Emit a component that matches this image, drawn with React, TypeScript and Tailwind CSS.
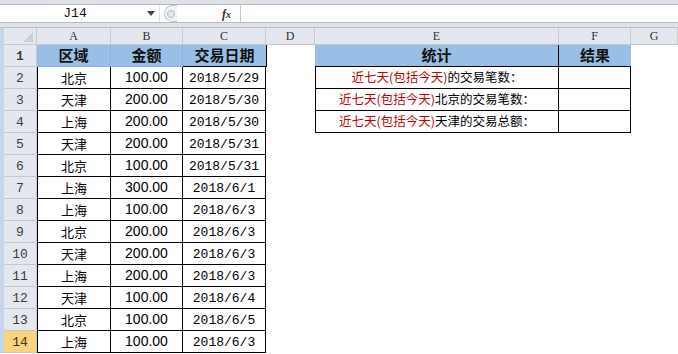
import React from "react";

const CJK = "font-['Noto_Sans_CJK_SC',sans-serif]";

const data: [string, string, string][] = [
  ["北京", "100.00", "2018/5/29"],
  ["天津", "200.00", "2018/5/30"],
  ["上海", "200.00", "2018/5/30"],
  ["天津", "200.00", "2018/5/31"],
  ["北京", "100.00", "2018/5/31"],
  ["上海", "300.00", "2018/6/1"],
  ["上海", "100.00", "2018/6/3"],
  ["北京", "200.00", "2018/6/3"],
  ["天津", "200.00", "2018/6/3"],
  ["上海", "200.00", "2018/6/3"],
  ["天津", "100.00", "2018/6/4"],
  ["北京", "100.00", "2018/6/5"],
  ["上海", "100.00", "2018/6/3"],
];

const stats = ["的交易笔数：", "北京的交易笔数：", "天津的交易总额："];

function RowHead({ n, selected }: { n: number; selected?: boolean }) {
  return (
    <>
      <div className="w-[4px] shrink-0 bg-[#c5d5ea]" />
      <div
        className={
          "flex w-[33px] shrink-0 items-center justify-center border-r border-b border-[#c5cad2] pt-[2px] font-['Liberation_Mono',monospace] text-[13px] " +
          (selected ? "bg-[#f8d47f] text-[#3b3220]" : "bg-[#e4e8ee] text-[#3c3c3c]")
        }
      >
        {n}
      </div>
    </>
  );
}

function ColHead({ w, label }: { w: string; label: string }) {
  return (
    <div
      className={`${w} flex shrink-0 items-center justify-center border-r border-b border-[#c5cad2] bg-[#e4e8ee] font-['Liberation_Serif',serif] text-[12px] text-[#333]`}
    >
      {label}
    </div>
  );
}

export default function App() {
  return (
    <div className="relative h-[354px] w-[678px] overflow-hidden bg-white">
      {/* formula bar */}
      <div className="h-[28px] border-b border-[#b9c0c9] bg-[#dfe3e8] pt-[4px]">
        <div className="flex h-[19px] border-y border-[#b3bac3] bg-white pl-[5px]">
          <div className="flex w-[155px] items-center border-r border-[#dfe3e8]">
            <span className="w-[140px] text-center font-['Liberation_Mono',monospace] text-[13px] text-[#111]">J14</span>
            <svg width="8" height="5" viewBox="0 0 8 5" className="ml-[2px]">
              <path d="M0 0h8L4 5z" fill="#444" />
            </svg>
          </div>
          <div className="flex w-[80px] items-center">
            <div className="ml-[4px] flex h-[17px] w-[13px] items-center justify-center rounded-l-full border border-r-0 border-[#c3c8cf] bg-[#f2f3f5]">
              <div className="h-[8px] w-[8px] rounded-full border border-[#b8bdc4] bg-[#e6e8eb]" />
            </div>
            <span className="ml-[45px] font-['Liberation_Serif',serif] text-[12px] font-bold italic text-[#333]">
              f<span className="text-[10px]">x</span>
            </span>
          </div>
          <div className="flex-1 border-l border-[#c3c8cf]" />
        </div>
      </div>

      {/* column headers */}
      <div className="flex h-[17px]">
        <div className="w-[4px] shrink-0 bg-[#c5d5ea]" />
        <div className="relative w-[33px] shrink-0 border-r border-b border-[#c5cad2] bg-[#e4e8ee]">
          <svg width="10" height="10" viewBox="0 0 10 10" className="absolute right-[3px] bottom-[2px]">
            <path d="M10 0v10H0z" fill="#c9ced5" />
          </svg>
        </div>
        <ColHead w="w-[74px]" label="A" />
        <ColHead w="w-[72px]" label="B" />
        <ColHead w="w-[83px]" label="C" />
        <ColHead w="w-[49px]" label="D" />
        <ColHead w="w-[244px]" label="E" />
        <ColHead w="w-[72px]" label="F" />
        <ColHead w="flex-1" label="G" />
      </div>

      {/* row 1 */}
      <div className={`flex h-[22px] ${CJK} text-[15px] font-bold text-[#111]`}>
        <RowHead n={1} />
        <div className="flex w-[74px] shrink-0 items-center justify-center border-r border-b border-[#8fb0d6] bg-[#99bfe6]">区域</div>
        <div className="flex w-[72px] shrink-0 items-center justify-center border-r border-b border-[#8fb0d6] bg-[#99bfe6]">金额</div>
        <div className="flex w-[83px] shrink-0 items-center justify-center border-b border-black bg-[#99bfe6]">交易日期</div>
        <div className="w-[49px] shrink-0 border-l border-black" />
        <div className="flex w-[244px] shrink-0 items-center justify-center border-r border-b border-black bg-[#99bfe6]">统计</div>
        <div className="flex w-[72px] shrink-0 items-center justify-center border-b border-black bg-[#99bfe6]">结果</div>
        <div className="flex-1" />
      </div>

      {/* data rows */}
      {data.map(([area, amount, date], i) => {
        const n = i + 2;
        const stat = i < 3 ? stats[i] : null;
        return (
          <div key={n} className="flex h-[22px]">
            <RowHead n={n} selected={n === 14} />
            <div className={`flex w-[74px] shrink-0 items-center justify-center border-x border-b border-black pt-[1px] ${CJK} text-[13px] text-black`}>
              {area}
            </div>
            <div className="flex w-[72px] shrink-0 items-center justify-center border-r border-b border-black font-['Liberation_Sans',sans-serif] text-[14px] text-black">
              {amount}
            </div>
            <div className="flex w-[83px] shrink-0 items-center justify-center border-r border-b border-black pt-[2px] font-['Liberation_Mono',monospace] text-[13px] text-black">
              {date}
            </div>
            <div className="w-[49px] shrink-0" />
            {stat ? (
              <>
                <div className={`flex w-[244px] shrink-0 items-center justify-center border-x border-b border-black ${CJK} text-[12.5px] text-black`}>
                  <span className="text-[#c00000]">近七天(包括今天)</span>
                  {stat}
                </div>
                <div className="w-[72px] shrink-0 border-r border-b border-black" />
              </>
            ) : (
              <div className="w-[316px] shrink-0" />
            )}
            <div className="flex-1" />
          </div>
        );
      })}
    </div>
  );
}
